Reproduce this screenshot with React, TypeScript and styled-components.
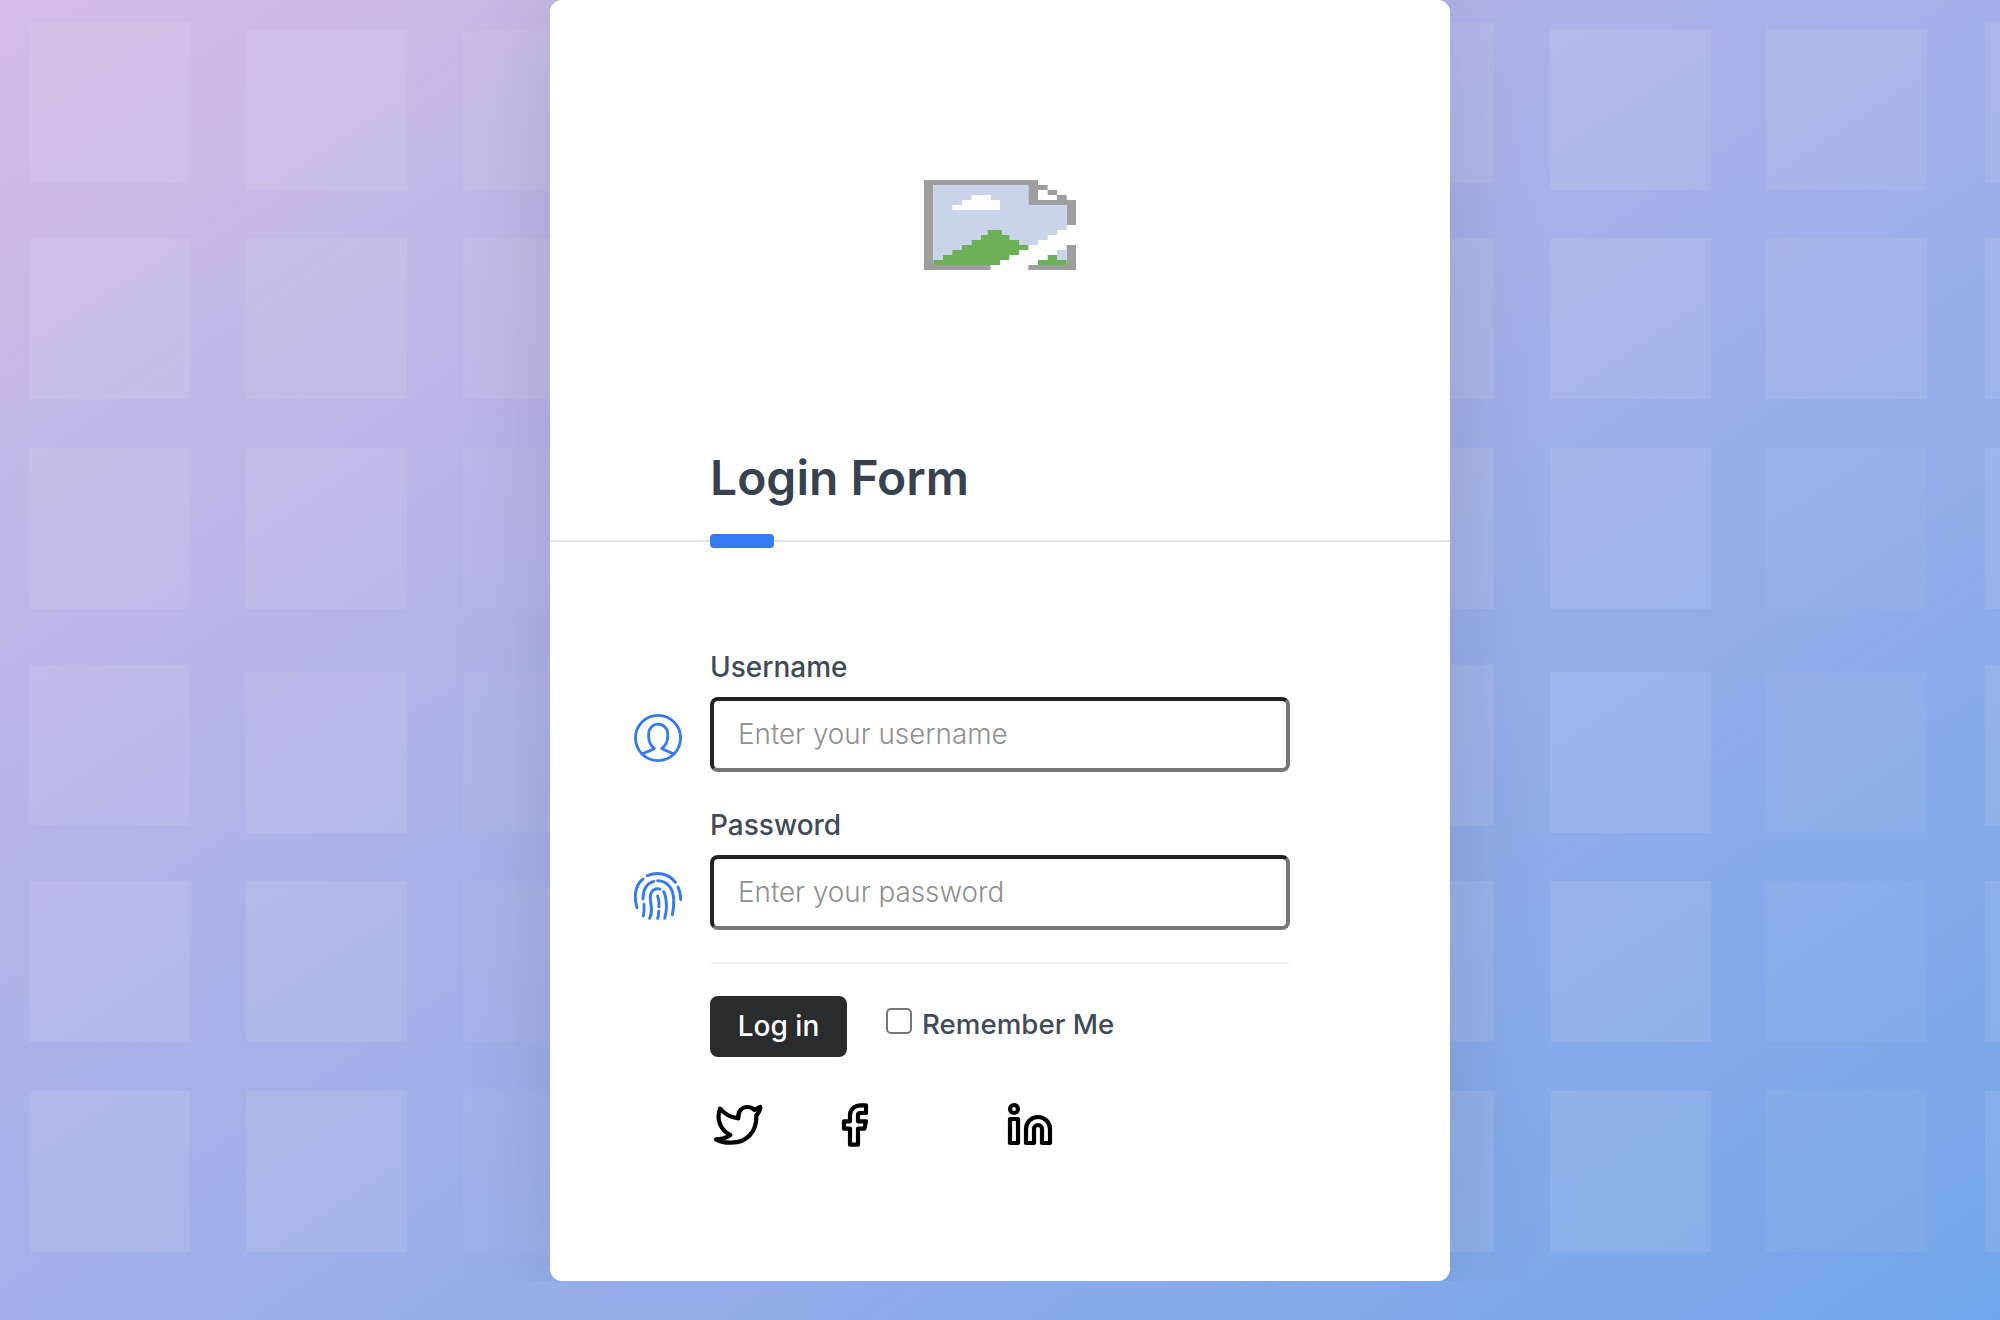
import React from 'react';
import styled, { createGlobalStyle } from 'styled-components';

const GlobalStyle = createGlobalStyle`
  *, *::before, *::after { box-sizing: border-box; }
  html, body { margin: 0; padding: 0; }
  body { overflow: hidden; font-family: Inter, Roboto, 'Liberation Sans', sans-serif; }
`;

const Page = styled.div`
  width: 2000px;
  height: 1320px;
  background: linear-gradient(to bottom right, #d4bce6 0%, #a3b0e9 50%, #72a5ea 100%);
`;

const Section = styled.section`
  position: relative;
  height: 1281px;
  display: flex;
  justify-content: center;
  overflow: hidden;
`;

const Pattern = styled.div`
  position: absolute;
  inset: 0;
  display: grid;
  grid-template-columns: repeat(4, 651.8px);
  grid-auto-rows: 643px;
  overflow: hidden;
`;

const Tile = styled.div`
  display: grid;
  grid-template-columns: repeat(3, 161px);
  grid-template-rows: 161px 161px 161px;
  column-gap: 55.8px;
  padding-left: 29.3px;
  padding-top: 28.8px;
  row-gap: 48.6px;
`;

const Square = styled.div<{ $alpha: number; $lift: number }>`
  background: rgba(232, 232, 238, ${(p) => p.$alpha});
  transform: translateY(${(p) => p.$lift}px);
`;

const Card = styled.main`
  position: relative;
  width: 900px;
  height: 1281px;
  background: #fff;
  border-radius: 12px;
  box-shadow: 0 0 100px rgba(0, 0, 0, 0.13);
`;

const Banner = styled.div`
  display: flex;
  justify-content: center;
  padding-top: 180px;
  height: 446px;
`;

const TitleBar = styled.header`
  height: 96px;
  padding: 0 160px;
  border-bottom: 2px solid #e4e4e4;
  display: flex;
  flex-direction: column;
`;

const Title = styled.h1`
  margin: 0;
  height: 88px;
  flex: none;
  line-height: 64px;
  font-size: 48px;
  font-weight: 600;
  color: #36424f;
`;

const Accent = styled.span`
  flex: none;
  width: 64px;
  height: 14px;
  border-radius: 4px;
  background: #347af1;
`;

const Form = styled.form`
  width: 580px;
  margin: 105px 0 0 160px;
`;

const Field = styled.div`
  display: grid;
  grid-template-columns: 76px 580px;
  grid-template-rows: 50px 75px;
  margin-left: -76px;
  margin-bottom: 33px;
`;

const Label = styled.label`
  grid-column: 2;
  line-height: 40px;
  font-size: 28px;
  font-weight: 450;
  color: #3f4a5a;
  white-space: nowrap;
`;

const FieldIcon = styled.svg`
  width: 48px;
  height: 48px;
  margin-top: 17px;
  fill: none;
  stroke: #347af1;
  stroke-linecap: round;
  stroke-linejoin: round;
`;

const Input = styled.input`
  width: 580px;
  height: 75px;
  border: 4px solid;
  border-color: #212121 #767676 #767676 #212121;
  border-radius: 8px;
  padding: 0 24px 2px;
  font-family: inherit;
  font-size: 27.8px;
  font-weight: 300;
  background: #fff;
  outline: none;
  &::placeholder { color: #8f8f8f; opacity: 1; }
`;

const Divider = styled.div`
  height: 2px;
  margin-top: -1px;
  margin-bottom: 32px;
  background: #f1f1f1;
`;

const Actions = styled.div`
  display: flex;
  height: 61px;
`;

const Submit = styled.button`
  width: 137px;
  height: 61px;
  border: 0;
  border-radius: 8px;
  padding: 0 0 2px;
  background: #2a2b2d;
  color: #fff;
  font-family: inherit;
  font-size: 28px;
  font-weight: 450;
`;

const Remember = styled.label`
  display: flex;
  align-items: flex-start;
  margin-left: 39px;
  padding-top: 8px;
  line-height: 40px;
  font-size: 27.7px;
  font-weight: 450;
  color: #3f4a5a;
  white-space: nowrap;
`;

const Checkbox = styled.input`
  appearance: none;
  width: 26px;
  height: 26px;
  margin: 4px 10px 0 0;
  border: 2px solid #767676;
  border-radius: 5px;
  background: #fff;
`;

const Socials = styled.div`
  display: flex;
  margin-top: 45px;
  margin-left: 2px;
  height: 46px;
`;

const SocialIcon = styled.svg<{ $gap: number }>`
  flex: none;
  height: 46px;
  margin-right: ${(p) => p.$gap}px;
  fill: none;
  stroke: #000;
  stroke-width: 12.6;
  stroke-linecap: round;
  stroke-linejoin: round;
`;

const ALPHAS = [
  [0.13, 0.13, 0.12],
  [0.13, 0.13, 0.12],
  [0.13, 0.13, 0.07],
];
const LOWER_ALPHAS = [
  [0.13, 0.13, 0.06],
  [0.13, 0.13, 0.06],
  [0.13, 0.13, 0.06],
];

function Squares() {
  return (
    <Pattern aria-hidden>
      {Array.from({ length: 8 }, (_, t) => (
        <Tile key={t}>
          {(t < 4 ? ALPHAS : LOWER_ALPHAS).flatMap((row, r) =>
            row.map((alpha, c) => (
              <Square key={`${r}-${c}`} $alpha={alpha} $lift={r === 0 && c === 0 ? -7.3 : 0} />
            )),
          )}
        </Tile>
      ))}
    </Pattern>
  );
}

function MissingImage() {
  return (
    <svg width="152" height="90" viewBox="72 60 456 270">
      <path fill="#9e9e9e" d="M72 60H414V75H443V90H471V105H500V120H528V195H500V135H385V75H100V315H272V330H72Z" />
      <path fill="#fff" d="M414 90H443V105H471V120H414Z" />
      <path fill="#c9d3ea" d="M100 75H385V135H500V210H471V225H443V240H414V255H385V300H100Z" />
      <path fill="#fff" d="M157 150V135H186V120H215V105H272V120H300V150Z" />
      <path fill="#6cb058" d="M100 315V300H129V285H157V270H186V255H215V240H243V225H263V210H306V225H328V240H357V255H385V270H357V285H328V300H300V315Z" />
      <path fill="#fff" d="M385 270H357V285H328V300H300V315H272V330H385Z" />
      <path fill="#9e9e9e" d="M500 255H528V330H385V315H500Z" />
      <path fill="#c9d3ea" d="M471 270H500V300H471Z" />
      <path fill="#6cb058" d="M414 315V300H443V285H471V300H500V315Z" />
    </svg>
  );
}

function UserIcon() {
  return (
    <FieldIcon viewBox="42 222 144 144" strokeWidth="8.5">
      <circle cx="114" cy="294" r="67.7" />
      <path d="M66 342C84 333 96 331 103 326C92 316 86 303 86 290V281A28 28 0 0 1 143 281V290C143 303 137 316 125 326C133 331 144 333 162 342" />
    </FieldIcon>
  );
}

function FingerprintIcon() {
  return (
    <FieldIcon viewBox="42 216 144 144" strokeWidth="8.8">
      <path d="M82 227C110 216 145 218 166 247" />
      <path d="M174 261C180 273 182 285 182 299" />
      <path d="M69 237C45 256 41 290 51 323" />
      <path d="M113 242C145 242 161 270 161 300C162 320 160 332 157 344" />
      <path d="M101 244C80 250 69 267 69 297" />
      <path d="M72 313C73 328 72 340 70 348" />
      <path d="M89 355C97 340 95 325 92 305C88 283 95 266 113 266C116 266 118 266 120 267" />
      <path d="M131 275C141 295 142 330 134 355" />
      <path d="M113 288C117 300 118 310 117 320" />
      <path d="M116 334C116 342 115 350 113 355" />
    </FieldIcon>
  );
}

export default function App() {
  return (
    <Page>
      <GlobalStyle />
      <Section>
        <Squares />
        <Card>
          <Banner>
            <MissingImage />
          </Banner>
          <TitleBar>
            <Title>Login Form</Title>
            <Accent />
          </TitleBar>
          <Form onSubmit={(e) => e.preventDefault()}>
            <Field>
              <Label htmlFor="username">Username</Label>
              <UserIcon />
              <Input id="username" type="text" placeholder="Enter your username" />
            </Field>
            <Field>
              <Label htmlFor="password">Password</Label>
              <FingerprintIcon />
              <Input id="password" type="password" placeholder="Enter your password" />
            </Field>
            <Divider />
            <Actions>
              <Submit type="submit">Log in</Submit>
              <Remember>
                <Checkbox type="checkbox" />
                Remember Me
              </Remember>
            </Actions>
            <Socials>
              <SocialIcon $gap={77} width="52" viewBox="66 366 156 138">
                <path d="M90 386C105 403 122 413 145 415C143 395 155 381 172 381C180 381 188 384 193 390L211 381C210 392 205 400 199 406C201 455 170 489 122 488C104 488 88 484 78 478C95 478 110 473 121 465C92 450 78 420 90 386Z" />
              </SocialIcon>
              <SocialIcon $gap={138} width="28" viewBox="453 366 84 138">
                <path d="M528 376H513C492 376 480 390 480 405V424H462V446H480V494H504V446H523L528 424H504V405C504 401 507 399 511 399H528Z" />
              </SocialIcon>
              <SocialIcon $gap={0} width="46" viewBox="951 366 138 138">
                <circle cx="972" cy="387" r="12" />
                <path d="M960 417H984V489H960Z" />
                <path d="M1008 489V447A36 36 0 0 1 1080 447V489H1056V447A12 12 0 0 0 1032 447V489Z" />
              </SocialIcon>
            </Socials>
          </Form>
        </Card>
      </Section>
    </Page>
  );
}
